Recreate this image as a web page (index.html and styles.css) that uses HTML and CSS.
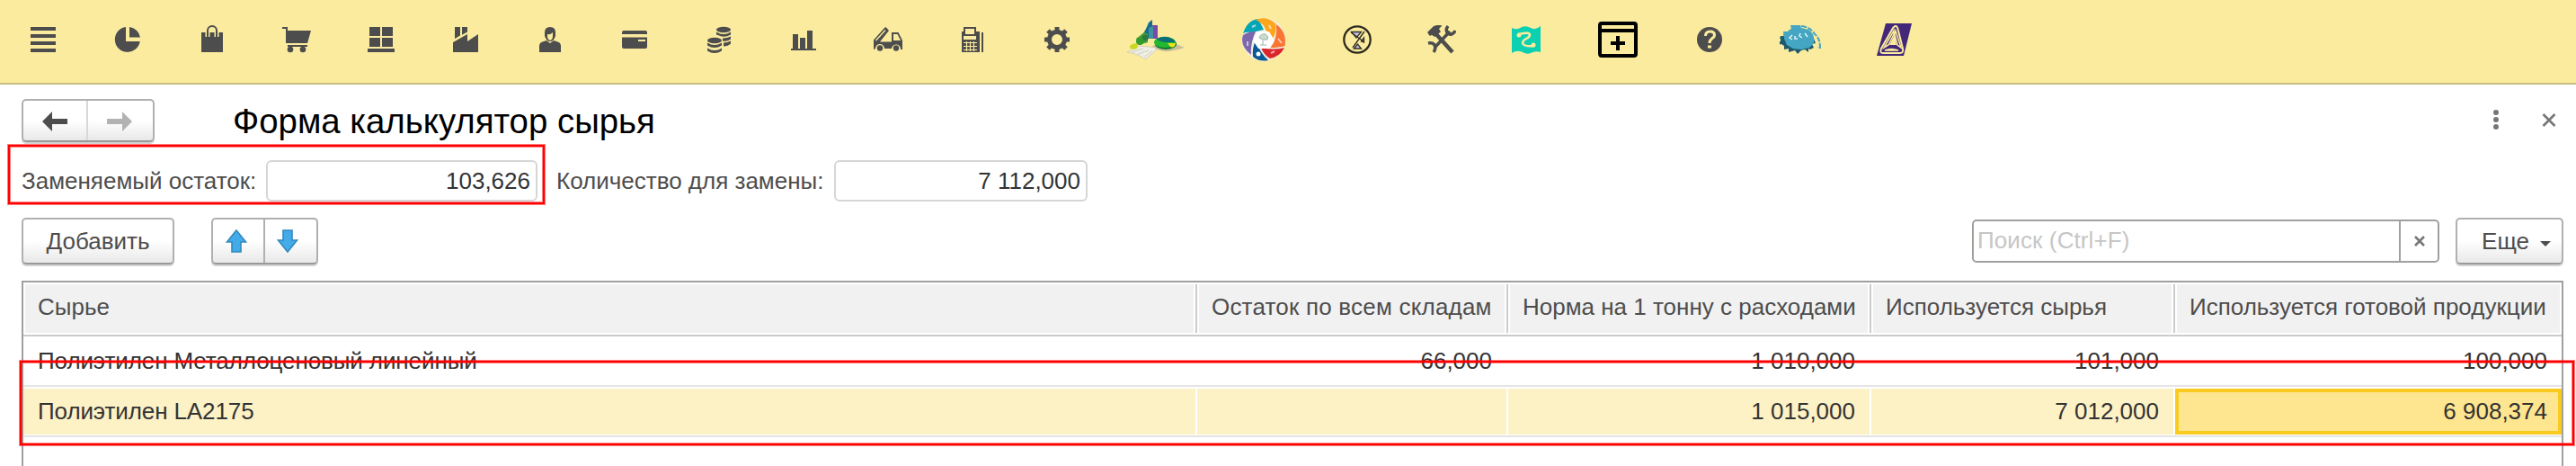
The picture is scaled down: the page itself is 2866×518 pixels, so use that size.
FILE: index.html
```html
<!DOCTYPE html>
<html lang="ru">
<head>
<meta charset="utf-8">
<title>Форма калькулятор сырья</title>
<link rel="stylesheet" href="styles.css">
</head>
<body>
<nav class="sections">
  <svg class="ico" viewBox="0 0 32 32"><path d="M2 4h28M2 12h28M2 20h28M2 28h28" stroke="#4d4d4d" stroke-width="4"/></svg>
  <svg class="ico" viewBox="0 0 32 32"><path d="M14 2v16h15.700A14 14 0 1 1 14 2z"/><path d="M18 2A14 14 0 0 1 30 13.500H18z"/></svg>
  <svg class="ico" viewBox="0 0 32 32"><path d="M4 8h24v22H4z"/><path d="M11 13V6a5 5 0 0 1 10 0v7" fill="none" stroke="#fbeb9e" stroke-width="5"/><path d="M11 13V6a5 5 0 0 1 10 0v7" fill="none" stroke="#4d4d4d" stroke-width="2"/></svg>
  <svg class="ico" viewBox="0 0 32 32"><path d="M0 2h6v4h26l-4 14H4V4H0zM6 22h22v2H6z"/><circle cx="9" cy="27" r="3.300"/><circle cx="23" cy="27" r="3.300"/></svg>
  <svg class="ico" viewBox="0 0 32 32"><path d="M3 2h12v10H3zM17 2h12v10H17zM3 14h12v10H3zM17 14h12v10H17zM1 26h30v4H1z"/></svg>
  <svg class="ico" viewBox="0 0 32 32"><path d="M2 30V19l16-9v8l12-8v20zM4 2h6v9.500L4 15zM12 2h6v5.500l-6 3.300z"/></svg>
  <svg class="ico" viewBox="0 0 32 32"><path d="M4 30v-7q0-4 5-5l3-1 4 3 4-3 3 1q5 1 5 5v7z"/><path d="M10 12V8q0-6 6-6t6 6v4q-2 6-6 6t-6-6z"/><path d="M13 10q3 1 6-2v4q0 4-3 5-3-1-3-5z" fill="#fbeb9e"/></svg>
  <svg class="ico" viewBox="0 0 32 32"><path d="M2 10V8q0-2 2-2h24q2 0 2 2v2zM2 13.500h28V24q0 2-2 2H4q-2 0-2-2z"/><path d="M20 16h8v2h-8z" fill="#fbeb9e"/></svg>
  <svg class="ico" viewBox="0 0 32 32"><ellipse cx="21" cy="5" rx="8" ry="3.300"/><path d="M13 7.500q8 5 16 0v3q-7 4-13 1l-3-1zM20 14.500q5 0 9-2v3q-4 3-9 2zM21 19.500q4 0 8-2v3q-3 3-8 3z"/><ellipse cx="11" cy="17" rx="8" ry="3.300"/><path d="M3 19.500q8 5 16 0v3q-8 5-16 0zM3 25.500q8 5 16 0v3q-8 5-16 0z"/></svg>
  <svg class="ico" viewBox="0 0 32 32"><path d="M2 26h28v2H2zM4 10h6v17H4zM12 14h6v13h-6zM20 6h6v21h-6z"/></svg>
  <svg class="ico" viewBox="0 0 32 32"><path d="M0 16.500 12 3l1.500-1L17 6 7 18.500h13V8h7.500L32 17v10h-2a5 5 0 0 0-10-1h-8a5 5 0 0 0-10 0l-2 1z"/><path d="M22 10h4.500l3.500 7h-8z" fill="#fbeb9e"/><path d="M2.500 17 13 5.500M9.500 17.500 17 8.500" stroke="#fbeb9e" stroke-width="1.400"/><circle cx="7" cy="25.500" r="3.200"/><circle cx="25" cy="25.500" r="3.200"/></svg>
  <svg class="ico" viewBox="0 0 32 32"><path d="M4 7h2V2h14v5h4v23H4zM26 8h2v22h-2z"/><path d="M8 4h10v6H8zM6 12h14v4H6z" fill="#fbeb9e"/><path d="M6 19.500h15M6 23.500h15M6 27.500h15M9.500 18v11M13.500 18v11M17.500 18v11" stroke="#fbeb9e" stroke-width="1.200"/></svg>
  <svg class="ico" viewBox="0 0 32 32"><circle cx="16" cy="16" r="8.500" fill="none" stroke="#4d4d4d" stroke-width="5"/><g stroke="#4d4d4d" stroke-width="5"><path d="M16 2v4M16 26v4M2 16h4M26 16h4M6 6l3 3M23 23l3 3M6 26l3-3M23 9l3-3"/></g></svg>
  <svg class="ico wide" viewBox="0 0 64 48">
    <path d="M0 38 14 31l20 2-3 4-11 9-6-4q-5-3-14-4z" fill="#f0efe6" stroke="#d5cfb4"/>
    <path d="M5 38l13-4M12 40l12-4M19 43l9-6" stroke="#cfccc0"/>
    <path d="M28 31q18-8 36 2l-7 2-10 2q-12 1-19-6z" fill="#c9c09a"/>
    <path d="M26 8h8v15H22z" fill="#7a49a8"/><path d="M14 22q6-6 10-17l4-3v21h-9z" fill="#176c8e"/><path d="M24 11l5-2v14h-5z" fill="#3d929d"/>
    <path d="M10 23 19 16l4 2v9l-9 3z" fill="#45a037"/><circle cx="20" cy="22" r="3.500" fill="#2d7a3c"/><circle cx="14" cy="26" r="4" fill="#339b2d"/><path d="M3 31q4-4 9-2l-1 5q-5 2-8-1z" fill="#c8d821"/>
    <ellipse cx="43" cy="29" rx="12" ry="6" fill="#12752f"/><ellipse cx="42" cy="27" rx="12" ry="6" fill="#22b830"/><path d="M42 27q-9-2-9-4 8-4 15-1 6 3 5 5z" fill="#0b6f76"/><path d="M45 28h9q-1 6-6 4z" fill="#e6e51c"/>
  </svg>
  <svg class="ico wheel" viewBox="0 0 52 52">
    <circle cx="26" cy="26" r="24" fill="#f3efe0"/>
    <path d="M3 19Q8 4 20 3l6 12-13 3q-6-1-10 1z" fill="#05a5b5"/>
    <path d="M17 4q12-5 22 4 2 8-3 17l-8-10q-2-7-11-11z" fill="#fda61b"/>
    <path d="M40 9q12 9 9.500 24-6 2-16 2 8-10 6.500-26z" fill="#fa7432"/>
    <path d="M49 35q-5 10-16 12-7-4-10-12 14 3 26 0z" fill="#db262c"/>
    <path d="M31 49q-10 2-17-4-1-10 3-18 5 14 14 22z" fill="#075a97"/>
    <path d="M12 43Q-1 33 3 21q6-4 14-4-6 13-5 26z" fill="#7c68ad"/>
    <path d="M19 17h13l6 10-6 9H20l-6-9z" fill="#fff"/>
    <path d="M21 24q2-5 7-4 4 2 2 6-6 1-9-2zM25 27v5M22 32h7" fill="#c9dccd" stroke="#9bb5a3"/>
    <circle cx="20" cy="42" r="2.500" fill="#fff"/><path d="m42 25 4 5M32 10l2 4M13 12l4-2M34 41l4-2M8 28v5" stroke="#fff" stroke-opacity=".6" stroke-width="2"/>
  </svg>
  <svg class="ico" viewBox="0 0 32 32"><circle cx="16" cy="16" r="14.700" fill="none" stroke="#2d2a1d" stroke-width="2.300"/><path d="M9.500 7.500h11L15 14z" fill="#c4c1df" stroke="#35322a" stroke-width="1.300"/><path d="m12.500 26 4-5 4 5zM20.500 18l3-4v5z" fill="#c4c1df" stroke="#35322a" stroke-width="1.300"/><path d="m9 8 14 10M24 7 11 25" stroke="#35322a" stroke-width="1.400"/></svg>
  <svg class="ico" viewBox="0 0 32 32"><path d="m9 9 19 21" stroke="#4d4d4d" stroke-width="4.500"/><path d="M1 8 7 2q4-2 8-1l-3 3 2 3-6 5-3-2-2 1zM7 27 25 7" stroke="#4d4d4d" stroke-width="1.500"/><path d="M8 25 25 7" stroke="#4d4d4d" stroke-width="3.500"/><path d="M23 1q-3 4-1 7t5 2q3-1 4-4M1 20q5-1 7 2 2 4-1 8" fill="none" stroke="#4d4d4d" stroke-width="3.500"/></svg>
  <svg class="ico" viewBox="0 0 32 32"><path d="M0 3q6 3 11-1 5-2 10 1 5 3 11-2v29q-6-2-11 1-4 2-9-1-6-3-12 1z" fill="#0bd1b2"/><path d="M8 10q12-3 12 1 0 2-4 4t-4 5q1 4 13 3" fill="none" stroke="#fbeb9e" stroke-width="2.500"/><circle cx="8" cy="11" r="2.500" fill="#fbeb9e"/><circle cx="24" cy="22" r="2.500" fill="#fbeb9e"/></svg>
  <svg class="ico box" viewBox="0 0 48 48"><rect x="4" y="6" width="40" height="36" rx="2" fill="none" stroke="#000" stroke-width="4"/><path d="M4 14h40M16 28h16M24 20v16" stroke="#000" stroke-width="4"/></svg>
  <svg class="ico" viewBox="0 0 32 32"><circle cx="16" cy="16" r="14"/><path d="M11.500 12q0-5 5-5t5 4q0 2-3 4-2.500 2-2.500 5M14 24h4" fill="none" stroke="#fbeb9e" stroke-width="3"/></svg>
  <svg class="ico gearfish" viewBox="0 0 46 32"><path d="M4 10l4-1q4-4 9-4h13q7 4 8 10l2 5-4 1 2 4-4 2-2-1v4l-4-3-4 1-4 4-3-4-7 2v-4l-5 1v-4l-3-2-5 1v-4h4v-3H0l1-3h4z" fill="#1d5a6f"/><path d="M4 7l5 0q1-2 4-3l-1-4h11l1 3 8 2q6 4 6 10v5l-5 5-9 2-9-1-7-4-3-7z" fill="#44a6c2"/><path d="m14 11-3 3 3 2M17 12v3h3M23 9l-1 3 3 2M28 9l3 4" fill="none" stroke="#e3f2f5" stroke-width="1.500"/><path d="M24 1q10 1 15 9 6 4 6 15h-3" fill="none" stroke="#44a6c2" stroke-width="2" stroke-dasharray="6 1.500"/></svg>
  <svg class="ico badge" viewBox="0 0 40 36"><path d="M10 0h29l-9 36H0z" fill="#432778"/><path d="M21 3q2 0 3 5l5 20q1 5-3 5H7q-4 0-2-5L17 7q2-4 4-4z" fill="#432778" stroke="#fbeb9e" stroke-width="2"/><path d="M19 8 8 27l5-3 6-12zM21 8l-1 4 3 12 4 3zM9 30q7-3 15 0z" fill="#432778" stroke="#fbeb9e" stroke-width="1.500"/><path d="m20 12-6 12h8z" fill="#fbeb9e"/></svg>
</nav>

<main class="form">
  <header class="titlebar">
    <div class="btn-group history">
      <span class="seg"><svg width="28" height="22" viewBox="0 0 28 22"><path d="M0 11 11 0v8h17v6H11v8z" fill="#4d4d4d"/></svg></span>
      <span class="seg"><svg width="28" height="22" viewBox="0 0 28 22"><path d="M28 11 17 0v8H0v6h17v8z" fill="#b3b3b3"/></svg></span>
    </div>
    <h1 class="title">Форма калькулятор сырья</h1>
    <svg class="window-tools" width="70" height="24" viewBox="0 0 70 24"><g fill="#777"><circle cx="5" cy="4" r="3"/><circle cx="5" cy="12" r="3"/><circle cx="5" cy="20" r="3"/></g><path d="m58.500 6 13 13M71.500 6l-13 13" transform="translate(-1 0)" stroke="#777" stroke-width="2.600"/></svg>
  </header>

  <section class="fields">
    <label class="label label-rest">Заменяемый остаток:</label><div class="input input-rest">103,626</div>
    <label class="label label-qty">Количество для замены:</label><div class="input input-qty">7 112,000</div>
    <div class="mark mark-field"></div>
  </section>

  <section class="commands">
    <div class="btn add">Добавить</div>
    <div class="btn-group move">
      <span class="seg"><svg width="24" height="26" viewBox="0 0 24 26"><path d="M12 1 22.500 14H17v11H7V14H1.500z" fill="#44abe9" stroke="#3289bf" stroke-width="1.600"/></svg></span>
      <span class="seg"><svg width="24" height="26" viewBox="0 0 24 26"><path d="M12 25 22.500 12H17V1H7v11H1.500z" fill="#44abe9" stroke="#3289bf" stroke-width="1.600"/></svg></span>
    </div>
    <div class="search"><span class="placeholder">Поиск (Ctrl+F)</span><span class="clear"><svg width="12" height="12" viewBox="0 0 12 12"><path d="m1 1 10 10M11 1 1 11" stroke="#777" stroke-width="2.600"/></svg></span></div>
    <div class="btn more">Еще<svg width="12" height="6" viewBox="0 0 12 6"><path d="M0 0h12L6 6z" fill="#4d4d4d"/></svg></div>
  </section>

  <section class="grid">
    <div class="row head"><div class="cell">Сырье</div><div class="cell spaced">Остаток по всем складам</div><div class="cell">Норма на 1 тонну с расходами</div><div class="cell">Используется сырья</div><div class="cell">Используется готовой продукции</div></div>
    <div class="row"><div class="cell name">Полиэтилен Металлоценовый линейный</div><div class="cell num">66,000</div><div class="cell num">1 010,000</div><div class="cell num">101,000</div><div class="cell num">100,000</div></div>
    <div class="row selected"><div class="cell name">Полиэтилен LA2175</div><div class="cell num"></div><div class="cell num">1 015,000</div><div class="cell num">7 012,000</div><div class="cell num current">6 908,374</div></div>
    <div class="mark mark-row"></div>
  </section>
</main>
</body>
</html>
```
FILE: styles.css
```css
* { box-sizing: border-box; }
body {
  margin: 0;
  height: 518px;
  overflow: hidden;
  background: #fff;
  color: #4d4d4d;
  font: 26px/30px "Liberation Sans", Arial, sans-serif;
}

.sections {
  display: flex;
  align-items: center;
  gap: 62px;
  height: 94px;
  padding: 0 32px 4px;
  background: #fbeb9e;
  border-bottom: 2px solid #c9bd7f;
}
.ico { flex: none; width: 32px; height: 32px; fill: #4d4d4d; }
.wide { width: 64px; height: 48px; }
.wheel { width: 52px; height: 52px; }
.box { width: 48px; height: 48px; }
.gearfish { width: 46px; }
.badge { width: 40px; height: 36px; }

.form { display: flex; flex-direction: column; height: 424px; padding: 16px 14px 0 24px; }

.btn, .btn-group {
  display: flex;
  border: 2px solid #b0b0b0;
  border-bottom-color: #999;
  border-radius: 5px;
  background: linear-gradient(#fff 50%, #e8e8e8);
  box-shadow: 0 2px 0 #d4d4d4;
}
.btn { align-items: center; justify-content: center; height: 52px; padding-bottom: 1px; }
.seg { flex: 1; display: flex; align-items: center; justify-content: center; }
.seg + .seg { border-left: 2px solid #b0b0b0; }

.titlebar { display: flex; align-items: center; height: 48px; }
.history { width: 148px; height: 48px; }
.history .seg { padding-top: 1px; }
.history .seg + .seg { border-color: #d8d8d8; padding-right: 2px; }
.title { margin: 0 0 0 87px; color: #000; font-size: 38.400px; font-weight: 400; line-height: 48px; padding-top: 2px; }
.window-tools { margin: 0 10px 2px auto; overflow: visible; }

.fields { position: relative; display: flex; align-items: center; height: 46px; margin-top: 20px; }
.label-rest { width: 272px; }
.label-qty { width: 309px; margin-left: 21px; }
.label { white-space: nowrap; }
.input {
  height: 46px;
  padding-right: 6px;
  border: 2px solid #d6d6d6;
  border-radius: 6px;
  color: #333;
  line-height: 42px;
  text-align: right;
}
.input-rest { width: 302px; }
.input-qty { width: 282px; }

.commands { display: flex; align-items: center; height: 52px; margin-top: 18px; }
.add { width: 170px; }
.move { width: 119px; height: 52px; margin-left: 41px; }
.move .seg { padding-right: 4px; }
.move .seg + .seg { padding-right: 6px; }
.search { display: flex; width: 520px; height: 48px; margin-left: auto; border: 2px solid #a0a0a0; border-radius: 5px; }
.placeholder { flex: 1; padding-left: 4px; color: #c6c6c6; line-height: 43px; letter-spacing: .100px; }
.clear { display: flex; align-items: center; justify-content: center; width: 43px; border-left: 2px solid #a0a0a0; }
.more { gap: 12px; width: 120px; margin-left: 18px; padding-left: 15px; }
.more svg { margin-top: 7px; }

.grid {
  position: relative;
  flex: 1;
  margin-top: 18px;
  border: 2px solid #a0a0a0;
  border-bottom: 0;
}
.row {
  display: grid;
  grid-template-columns: 1306px 346px 404px 338px 1fr;
  height: 56px;
  padding: 2px 0;
  border-bottom: 2px solid #e5e5e5;
}
.cell { padding: 0 16px; color: #333; line-height: 50px; white-space: nowrap; border-right: 2px solid #fff; }
.cell:last-child { border-right: 0; }
.name { letter-spacing: -.100px; }
.num { text-align: right; }
.head { height: 60px; padding: 0; border-bottom-color: #cbcbcb; }
.head .cell { border: 2px solid #fff; border-right: 0; box-shadow: inset -2px 0 #cbcbcb, inset -4px 0 #fff; background: #f1f1f1; padding: 0 14px; color: #4d4d4d; line-height: 51px; }
.head .cell:last-child { box-shadow: none; border-right: 2px solid #fff; }
.head .spaced { letter-spacing: .200px; }
.selected .cell { background: #fdf1c6; }
.selected .current { background: #fee58f; border: 4px solid #f9cb1f; padding-right: 12px; line-height: 43px; }

/* red callout frames laid over the form */
.mark { position: absolute; border: 2px solid #f00; box-shadow: 0 0 0 1px rgba(255, 0, 0, .5), inset 0 0 0 1px rgba(255, 0, 0, .5); pointer-events: none; }
.mark-field { left: -15px; top: -17px; width: 597px; height: 66px; }
.mark-row { left: -4px; top: 87px; width: 2842px; height: 94px; }
```
